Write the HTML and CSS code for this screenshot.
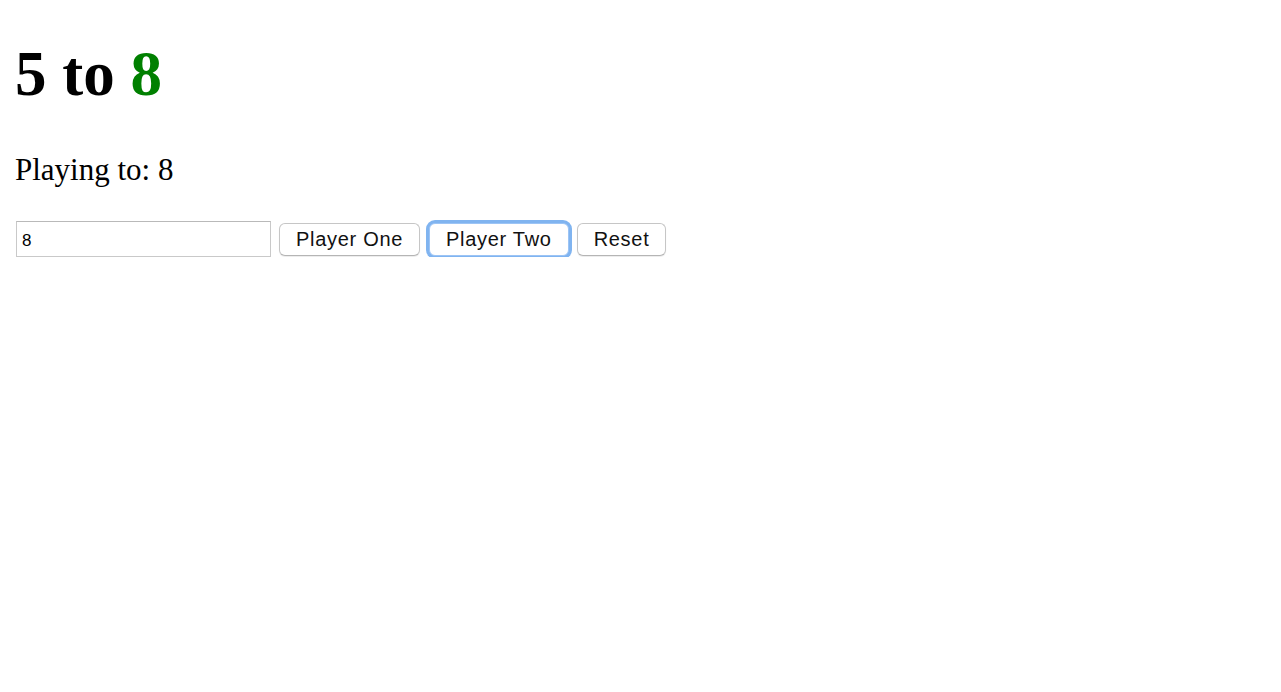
FILE: index.html
```html
<!DOCTYPE html>
<html>
<head>
<meta charset="utf-8">
<link rel="stylesheet" href="styles.css">
</head>
<body>
<div class="page">
  <h1 class="score">5 to <span class="winner">8</span></h1>
  <p class="target">Playing to: 8</p>
  <div class="controls">
    <input class="limit" type="text" value="8">
    <button class="btn">Player One</button>
    <button class="btn btn-focus">Player Two</button>
    <button class="btn">Reset</button>
  </div>
</div>
</body>
</html>
```
FILE: styles.css
```css
html, body {
  margin: 0;
  padding: 0;
  background: #ffffff;
}
.page {
  padding: 38px 15px 0 15px;
  font-family: "Liberation Serif", "Times New Roman", serif;
  color: #000;
}
.score {
  margin: 0;
  font-size: 63px;
  line-height: 72px;
  font-weight: bold;
}
.winner {
  color: #008000;
}
.target {
  margin: 43px 0 0 0;
  font-size: 31px;
  line-height: 34px;
}
.controls {
  margin-top: 34px;
  display: flex;
  align-items: center;
  gap: 8px;
}
.limit {
  box-sizing: border-box;
  width: 255px;
  height: 36px;
  margin: 0 0 0 1px;
  padding: 3px 5px 0 5px;
  border: 1px solid #c9c9c9;
  border-top-color: #b9b9b9;
  font-family: "Liberation Sans", Arial, sans-serif;
  font-size: 17px;
  color: #000;
  background: #fff;
  outline: none;
}
.btn {
  box-sizing: border-box;
  height: 33px;
  padding: 1px 16px 0 16px;
  border: 1px solid #c6c6c6;
  border-bottom-color: #b5b5b5;
  border-radius: 6px;
  background: #fff;
  font-family: "Liberation Sans", Arial, sans-serif;
  font-size: 20px;
  letter-spacing: 0.7px;
  color: #111;
  box-shadow: 0 1px 1px rgba(0,0,0,0.08);
}
.btn-focus {
  margin-left: 1px;
  border-color: #9cc4f5;
  box-shadow: 0 0 0 3px #80b4f0;
}
```
